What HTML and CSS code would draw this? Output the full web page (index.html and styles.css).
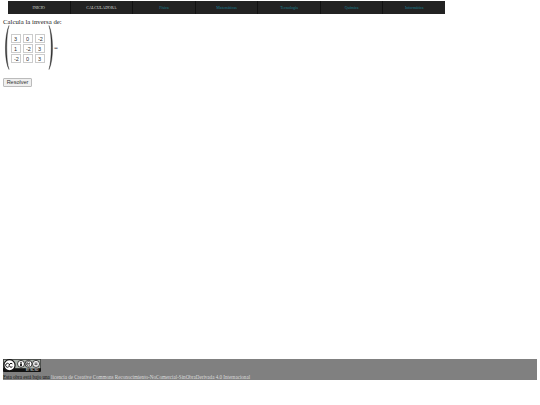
FILE: index.html
```html
<!DOCTYPE html>
<html lang="es">
<head>
    <meta charset="UTF-8">
    <title>Calcula la inversa</title>
    <link rel="stylesheet" href="styles.css">
</head>
<body>
<div class="menu">
    <a class="item">INICIO</a>
    <a class="item">CALCULADORA</a>
    <a class="item link">Física</a>
    <a class="item link">Matemáticas</a>
    <a class="item link">Tecnología</a>
    <a class="item link">Química</a>
    <a class="item link">Informática</a>
</div>
<div class="content">
    <div class="title">Calcula la inversa de:</div>
    <div class="problem">
        <svg class="paren" width="7" height="45" viewBox="0 0 7 45">
            <path d="M6 0.5C1.5 10 1 35 6 44.5C3 35 3 10 6 0.5Z" fill="#333" stroke="#333" stroke-width="0.4"/>
        </svg>
        <div class="matrix">
            <input class="cell" value="3"><input class="cell" value="0"><input class="cell" value="-2">
            <input class="cell" value="1"><input class="cell" value="-2"><input class="cell" value="3">
            <input class="cell" value="-2"><input class="cell" value="0"><input class="cell" value="3">
        </div>
        <svg class="paren" width="6" height="45" viewBox="0 0 6 45">
            <path d="M1 0.5C5.5 10 6 35 1 44.5C4 35 4 10 1 0.5Z" fill="#333" stroke="#333" stroke-width="0.4"/>
        </svg>
        <span class="equals">=</span>
    </div>
    <button class="solve">Resolver</button>
</div>
<div class="footer">
    <svg class="badge" width="38" height="13" viewBox="0 0 38 13">
        <rect x="0" y="0" width="38" height="13" rx="1" fill="#111"/>
        <rect x="0.6" y="0.6" width="36.8" height="8.6" fill="#aab2ab"/>
        <circle cx="6.5" cy="6.3" r="5.6" fill="#fff" stroke="#111" stroke-width="1.2"/>
        <path d="M5.8 4.9a1.9 1.9 0 1 0 0 2.8M9.4 4.9a1.9 1.9 0 1 0 0 2.8" fill="none" stroke="#111" stroke-width="1"/>
        <circle cx="18" cy="4.9" r="3.5" fill="#fff" stroke="#111" stroke-width="0.8"/>
        <circle cx="18" cy="3.4" r="0.7" fill="#111"/>
        <rect x="17.1" y="4.4" width="1.8" height="2.8" fill="#111"/>
        <circle cx="25.5" cy="4.9" r="3.5" fill="#fff" stroke="#111" stroke-width="0.8"/>
        <path d="M24 4.9h3" stroke="#111" stroke-width="1"/>
        <path d="M27 3.3a2.2 2.2 0 1 0 0 3.2" fill="none" stroke="#111" stroke-width="0.7"/>
        <circle cx="33" cy="4.9" r="3.5" fill="#fff" stroke="#111" stroke-width="0.8"/>
        <path d="M31.5 4.1h3M31.5 5.7h3" stroke="#111" stroke-width="0.8"/>
        <text x="23" y="12.1" class="badge-text">BY NC ND</text>
    </svg>
    <div class="license">Esta obra está bajo una <a class="license-link">licencia de Creative Commons Reconocimiento-NoComercial-SinObraDerivada 4.0 Internacional</a></div>
</div>
</body>
</html>
```

FILE: styles.css
```css
* {
    box-sizing: border-box;
}

body {
    margin: 0;
    height: 405px;
    overflow: hidden;
    background: #fff;
    font-family: "Liberation Serif", serif;
    color: #222;
}

.menu {
    display: flex;
    width: 437px;
    height: 13px;
    margin: 1px 0 0 8px;
    background: #222;
}

.item {
    flex: 1;
    font-size: 4px;
    line-height: 13px;
    text-align: center;
    color: #ddd;
    border-right: 1px solid #111;
}

.item:last-child {
    border-right: 0;
}

.link {
    color: #1a7f92;
}

.content {
    padding: 0 3px;
}

.title {
    margin-top: 4px;
    font-size: 6.8px;
    line-height: 7px;
}

.problem {
    display: flex;
    align-items: center;
}

.matrix {
    display: grid;
    grid-template-columns: repeat(3, 10px);
    grid-auto-rows: 9px;
    gap: 1px 2px;
    margin: 2px 3px 0 1px;
}

.cell {
    width: 10px;
    height: 9px;
    padding: 0 0 0 2px;
    border: 1px solid #ccc;
    font-family: "Liberation Sans", sans-serif;
    font-size: 5.5px;
    color: #333;
    background: #fff;
}

.equals {
    font-size: 7px;
}

.solve {
    display: block;
    width: 29px;
    height: 9px;
    margin-top: 8px;
    padding: 0;
    border: 1px solid #bbb;
    border-radius: 1px;
    background: #efefef;
    font-family: "Liberation Sans", sans-serif;
    font-size: 5.5px;
    line-height: 7px;
    color: #333;
}

.footer {
    width: 534px;
    height: 21px;
    margin: 272px 0 0 3px;
    background: #808080;
}

.badge {
    display: block;
}

.badge-text {
    font-family: "Liberation Sans", sans-serif;
    font-size: 2.6px;
    fill: #fff;
}

.license {
    margin-top: 2px;
    font-size: 5.08px;
    line-height: 6px;
    color: #111;
    white-space: nowrap;
}

.license-link {
    color: #ddd;
}
```
